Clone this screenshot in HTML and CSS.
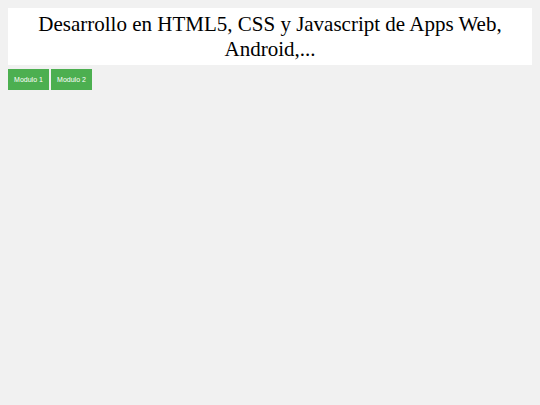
FILE: index.html
```html
<!DOCTYPE html>
<html>
<head>
<meta charset="utf-8">
<link rel="stylesheet" href="styles.css">
</head>
<body>
<header class="banner">
  <h1 class="title">Desarrollo en HTML5, CSS y Javascript de Apps Web, Android,...</h1>
</header>
<nav class="menu">
  <button class="tab">Modulo 1</button>
  <button class="tab">Modulo 2</button>
</nav>
</body>
</html>
```
FILE: styles.css
```css
html, body {
  background: #f1f1f1;
}
body {
  margin: 8px;
}
.banner {
  background: #fff;
}
.title {
  margin: 0;
  font-family: "Liberation Serif", serif;
  font-weight: normal;
  font-size: 21px;
  line-height: 25px;
  padding: 4px 0 3px;
  text-align: center;
  color: #000;
}
.menu {
  display: flex;
  gap: 2px;
  margin-top: 4px;
}
.tab {
  background: #4caf50;
  color: #fff;
  border: none;
  font-family: "Liberation Sans", sans-serif;
  font-size: 7px;
  width: 41px;
  height: 21px;
  padding: 0;
  cursor: pointer;
}
```
